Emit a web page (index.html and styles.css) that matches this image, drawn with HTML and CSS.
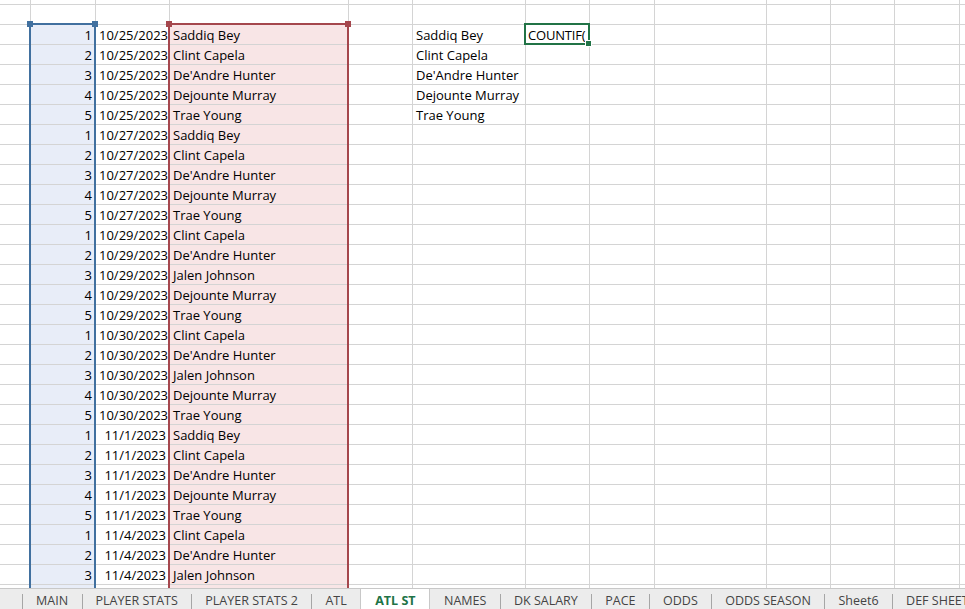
FILE: index.html
```html
<!DOCTYPE html>
<html lang="en">
<head>
  <meta charset="UTF-8" />
  <meta name="viewport" content="width=device-width, initial-scale=1.0"/>
  <title>ATL ST</title>
  <link rel="stylesheet" href="styles.css">
</head>
<body>

<div id="sheet">
  <div id="grid"></div>

  <div class="sel sel-blue">
    <span class="handle left"></span>
    <span class="handle right"></span>
  </div>
  <div class="sel sel-red">
    <span class="handle left"></span>
    <span class="handle right"></span>
  </div>
  <div class="active-cell"><span class="fill-handle"></span></div>
</div>

<div id="tabs">
  <div class="tab">MAIN</div>
  <div class="tab">PLAYER STATS</div>
  <div class="tab">PLAYER STATS 2</div>
  <div class="tab">ATL</div>
  <div class="tab active">ATL ST</div>
  <div class="tab">NAMES</div>
  <div class="tab">DK SALARY</div>
  <div class="tab">PACE</div>
  <div class="tab">ODDS</div>
  <div class="tab">ODDS SEASON</div>
  <div class="tab">Sheet6</div>
  <div class="tab">DEF SHEET</div>
</div>

<script>
  const starters = ['Saddiq Bey', 'Clint Capela', "De'Andre Hunter", 'Dejounte Murray', 'Trae Young'];
  const withJalen = ['Clint Capela', "De'Andre Hunter", 'Jalen Johnson', 'Dejounte Murray', 'Trae Young'];

  const games = [
    ['10/25/2023', starters],
    ['10/27/2023', starters],
    ['10/29/2023', withJalen],
    ['10/30/2023', withJalen],
    ['11/1/2023', starters],
    ['11/4/2023', withJalen.slice(0, 3)]
  ];

  const rows = [];
  games.forEach(([date, players]) => {
    players.forEach((name, i) => rows.push([i + 1, date, name]));
  });

  const grid = document.getElementById('grid');
  const COLS = 13;
  const ROWS = 31;
  const FIRST = 2; // first row holding data

  for (let r = 0; r < ROWS; r++) {
    for (let c = 0; c < COLS; c++) {
      const cell = document.createElement('div');
      cell.className = 'cell';
      const d = rows[r - FIRST];

      if (r >= FIRST && c === 1) cell.classList.add('fill-blue');
      if (r >= FIRST && c === 3) cell.classList.add('fill-red');

      if (d && c === 1) { cell.textContent = d[0]; cell.classList.add('num'); }
      if (d && c === 2) { cell.textContent = d[1]; cell.classList.add('num'); }
      if (d && c === 3) cell.textContent = d[2];

      if (r >= FIRST && r < FIRST + 5 && c === 5) cell.textContent = starters[r - FIRST];
      if (r === FIRST && c === 6) {
        cell.textContent = 'COUNTIF(';
        cell.classList.add('editing');
      }

      grid.appendChild(cell);
    }
  }
</script>

</body>
</html>
```

FILE: styles.css
```css
body {
  margin: 0;
  background-color: #fff;
  font-family: "Open Sans", Arial, sans-serif;
  overflow: hidden;
}

#sheet {
  position: relative;
  height: 588px;
  overflow: hidden;
}

#grid {
  display: grid;
  grid-template-columns: 31px 65px 74px 179px 64px 113px 64px 65px 112px 64px 64px 65px 1fr;
  grid-template-rows: 5px repeat(30, 20px);
}

.cell {
  box-sizing: border-box;
  border-right: 1px solid #d4d4d4;
  border-bottom: 1px solid #d4d4d4;
  padding: 0 3px;
  font-size: 13px;
  line-height: 21px;
  color: #000;
  white-space: nowrap;
  overflow: hidden;
}

.cell.num {
  text-align: right;
}

.cell.editing {
  padding-left: 2px;
  letter-spacing: -0.2px;
  overflow: visible;
}

.fill-blue {
  background-color: #e8edf8;
}

.fill-red {
  background-color: #f8e5e6;
}

/* selection outlines */
.sel {
  position: absolute;
  top: 23px;
  height: 600px;
  box-sizing: border-box;
  border: 2px solid;
}

.sel-blue {
  left: 29px;
  width: 67px;
  border-color: #41709f;
}

.sel-red {
  left: 168px;
  width: 181px;
  border-color: #a5474d;
}

.handle {
  position: absolute;
  top: -4px;
  width: 6px;
  height: 6px;
}

.sel-blue .handle { background-color: #41709f; }
.sel-red .handle { background-color: #a5474d; }

.handle.left { left: -4px; }
.handle.right { right: -4px; }

.active-cell {
  position: absolute;
  left: 524px;
  top: 23px;
  width: 66px;
  height: 22px;
  box-sizing: border-box;
  border: 2px solid #217346;
}

.fill-handle {
  position: absolute;
  right: -4px;
  bottom: -4px;
  width: 5px;
  height: 5px;
  background-color: #217346;
  border: 1px solid #fff;
}

/* sheet tabs */
#tabs {
  display: flex;
  box-sizing: border-box;
  height: 21px;
  padding-left: 22px;
  background-color: #ececec;
  border-top: 1px solid #c8c8c8;
  font-size: 12.5px;
  color: #444;
  white-space: nowrap;
  overflow: hidden;
}

.tab {
  position: relative;
  padding: 3px 13.5px 0 14px;
  line-height: 18px;
}

.tab::before {
  content: "";
  position: absolute;
  left: 0;
  top: 5px;
  bottom: 0;
  width: 1px;
  background-color: #a6a6a6;
}

.tab.active {
  margin-top: -1px;
  padding-top: 4px;
  background-color: #fff;
  border-left: 1px solid #c8c8c8;
  border-right: 1px solid #c8c8c8;
  color: #217346;
  font-weight: bold;
}

.tab.active::before,
.tab.active + .tab::before {
  display: none;
}
```
